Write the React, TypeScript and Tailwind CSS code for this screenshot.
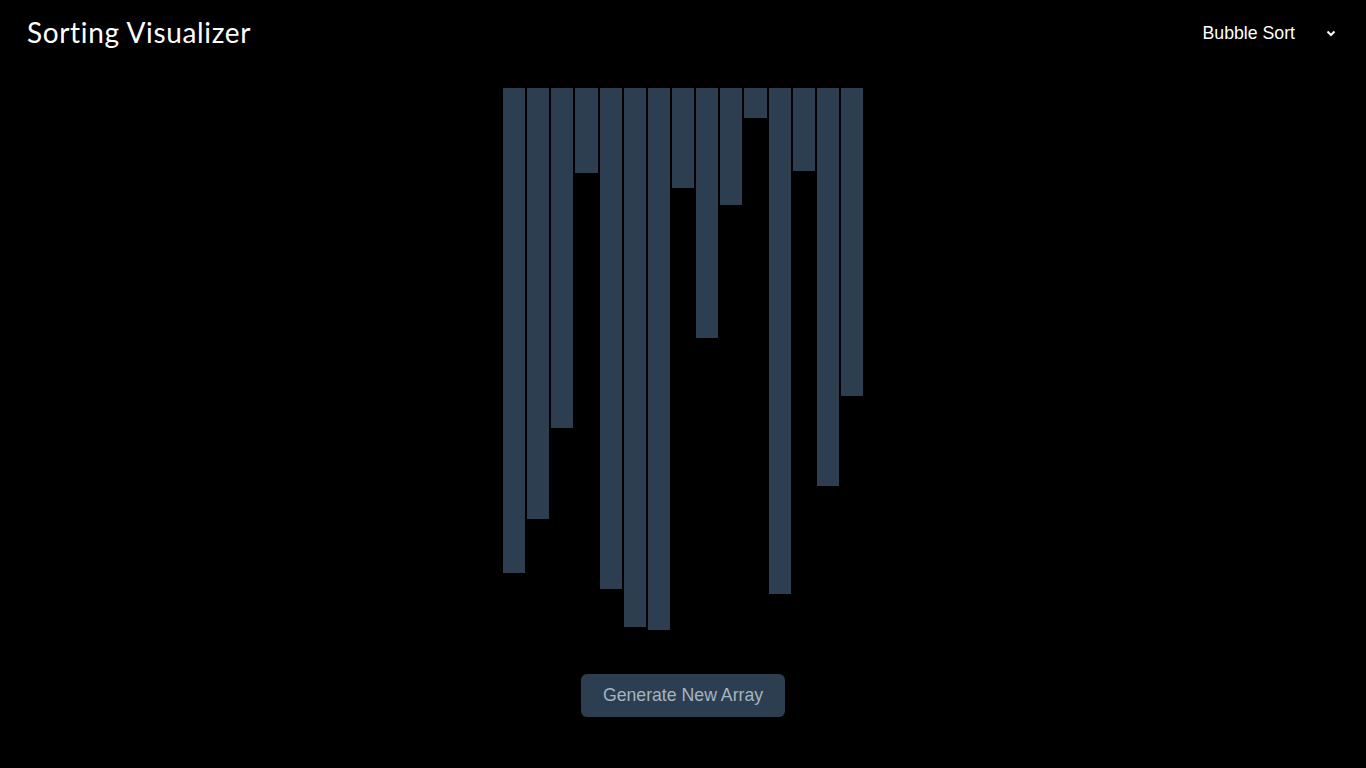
import React from "react";

const heights = [485, 431, 340, 85, 501, 539, 542, 100, 250, 117, 30, 506, 83, 398, 308];

export default function App() {
  return (
    <div className="min-h-screen w-full bg-black text-white">
      <header className="flex h-[66px] items-center justify-between pl-[27px] pr-[30px]">
        <h1
          className="mb-[2px] text-[28px] font-normal leading-none tracking-[0.65px] text-white"
          style={{ fontFamily: "Lato, 'Noto Sans', sans-serif" }}
        >
          Sorting Visualizer
        </h1>
        <div
          className="flex items-center gap-[31px] text-[17.7px] text-white"
          style={{ fontFamily: "'Liberation Sans', Arial, sans-serif" }}
        >
          <span>Bubble Sort</span>
          <svg width="10" height="7" viewBox="0 0 10 7" className="mt-[1px]">
            <path d="M1.5 1.5 L5 5 L8.5 1.5" fill="none" stroke="white" strokeWidth="2" />
          </svg>
        </div>
      </header>
      <main className="flex flex-col items-center pt-[22px]">
        <div className="flex h-[542px] w-[360px] items-start gap-[2px]">
          {heights.map((h, i) => (
            <div key={i} className="flex-1 bg-[#2c3e50]" style={{ height: h }} />
          ))}
        </div>
        <button
          className="mt-[44px] h-[43px] w-[204px] rounded-[6px] bg-[#2c3e50] text-[17.7px] text-[#a5b4c3]"
          style={{ fontFamily: "'Liberation Sans', Arial, sans-serif" }}
        >
          Generate New Array
        </button>
      </main>
    </div>
  );
}
